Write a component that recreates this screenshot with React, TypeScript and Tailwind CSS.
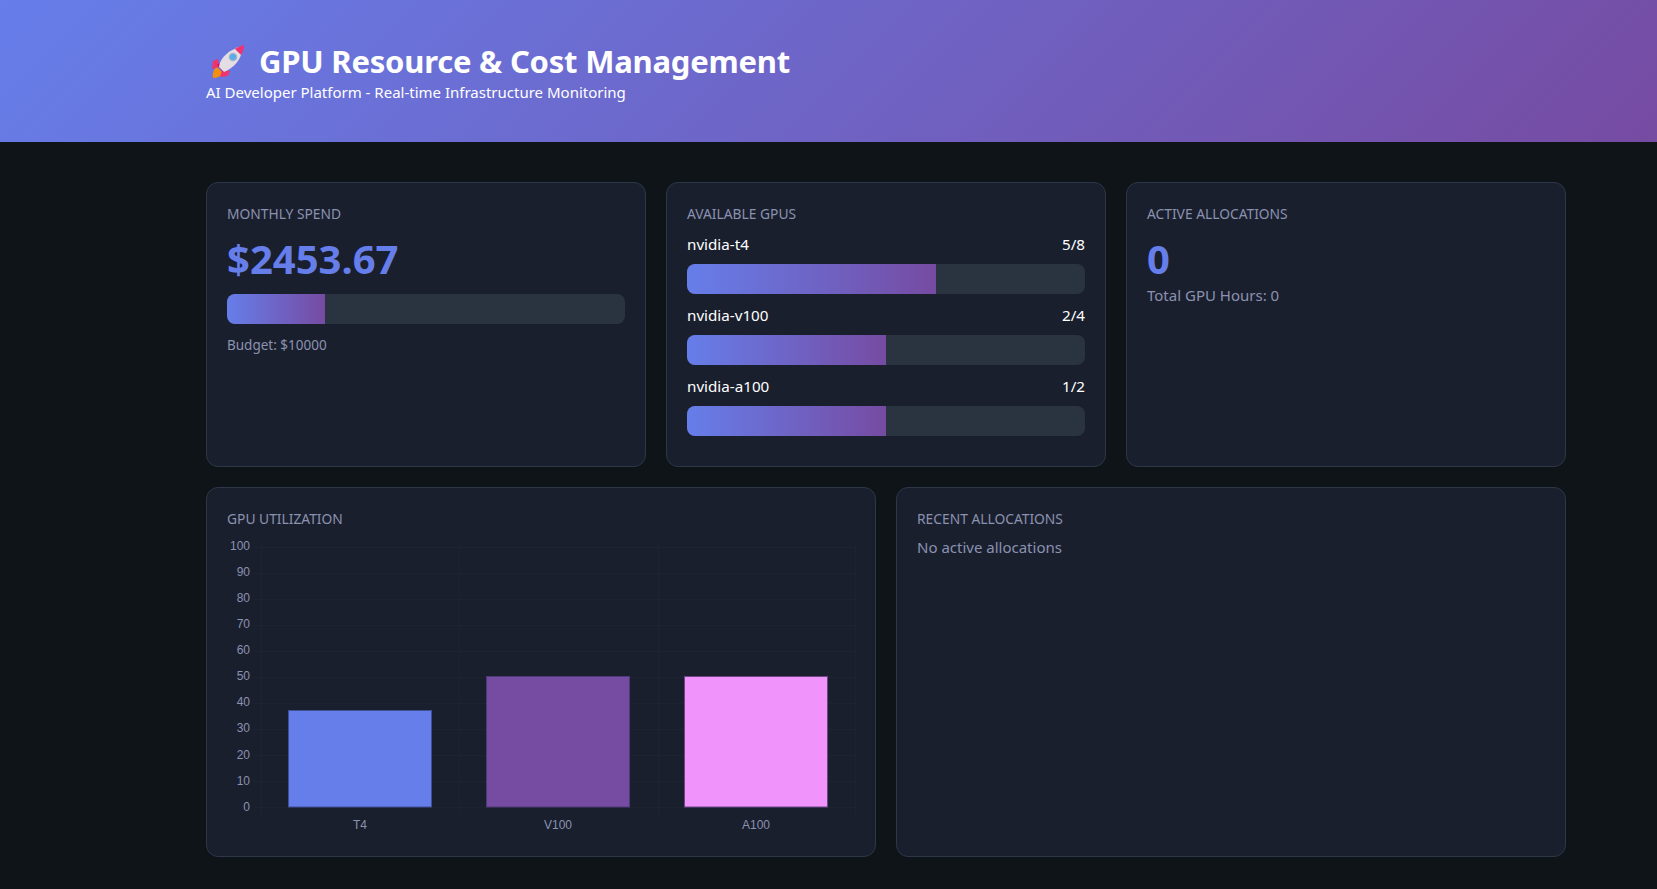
import type { ReactNode } from "react";

const gpus = [
  { name: "nvidia-t4", used: 5, total: 8 },
  { name: "nvidia-v100", used: 2, total: 4 },
  { name: "nvidia-a100", used: 1, total: 2 },
];

const bars = [
  { label: "T4", x: 288.5, top: 710.5, fill: "#667eea", stroke: "#3f4f95" },
  { label: "V100", x: 486.5, top: 676.5, fill: "#764ba2", stroke: "#4d3a78" },
  { label: "A100", x: 684.5, top: 676.5, fill: "#f093fb", stroke: "#6d4785" },
];

const Card = ({ title, children }: { title: string; children: ReactNode }) => (
  <div className="rounded-xl border border-[#2d3748] bg-[#1a1f2e] px-5 pt-5">
    <h3 className="mb-[9px] text-[13.8px] leading-[21px] font-normal text-[#8b92b0] uppercase">{title}</h3>
    {children}
  </div>
);

const Progress = ({ percent }: { percent: number }) => (
  <div className="h-[30px] overflow-hidden rounded-lg bg-[#2a3441]">
    <div
      className="h-full bg-[linear-gradient(90deg,#667eea,#764ba2)]"
      style={{ width: `${percent}%` }}
    />
  </div>
);

const Rocket = () => (
  <svg viewBox="0 0 36 36" className="mr-[13px] ml-1 h-9 w-9 shrink-0">
    <path d="M3 35c-1-5 1-9 4-11l6 6c-2 3-6 5-10 5z" fill="#f4900c" />
    <path d="M8 16l-5 2-1 8 7-2zM20 28l-2 5-8 1 2-7z" fill="#f0326e" />
    <path d="M7 22l6 7 3-1-7-8z" fill="#c2185b" />
    <path d="M9 24C10 14 20 6 33 3c-1 13-9 22-19 26z" fill="#e4dde3" />
    <path d="M25 6c2-2 6-3 9-4 0 3-1 7-3 10z" fill="#f0326e" />
    <circle cx="23" cy="14" r="3.6" fill="#55acee" stroke="#a7b4c0" strokeWidth="1.3" />
  </svg>
);

const UtilizationChart = () => {
  const ticks = [100, 90, 80, 70, 60, 50, 40, 30, 20, 10, 0];
  return (
    <svg width="629" height="300" viewBox="227 538 629 300" className="block">
      {ticks.map((t, i) => {
        const y = 546.5 + i * 26.05;
        return (
          <g key={t}>
            <line x1="254" x2="855" y1={Math.round(y) + 0.5} y2={Math.round(y) + 0.5} stroke="#1e2331" />
            <text x="250" y={y + 3.6} textAnchor="end" fontSize="12" fill="#8b92b0" fontFamily="Liberation Sans, sans-serif">
              {t}
            </text>
          </g>
        );
      })}
      {[261.5, 459.5, 658.5, 855.5].map((x) => (
        <line key={x} x1={x} x2={x} y1="546" y2="815" stroke="#1e2331" />
      ))}
      {bars.map((b) => (
        <g key={b.label}>
          <rect x={b.x} y={b.top} width="143" height={807 - b.top} fill={b.fill} stroke={b.stroke} />
          <text
            x={b.x + 71.5}
            y="829"
            textAnchor="middle"
            fontSize="12"
            fill="#8b92b0"
            fontFamily="Liberation Sans, sans-serif"
          >
            {b.label}
          </text>
        </g>
      ))}
    </svg>
  );
};

export default function App() {
  return (
    <div className="min-h-[889px] bg-[#0f1419] font-['Noto_Sans','Open_Sans',sans-serif] text-white">
      <header className="h-[142px] bg-[linear-gradient(135deg,#667eea,#764ba2)] pt-[39px] pl-[206px]">
        <h1 className="flex items-center text-[31px] leading-[44px] font-bold tracking-[-0.22px]">
          <Rocket />
          GPU Resource &amp; Cost Management
        </h1>
        <p className="mt-[-2px] text-[15px] leading-[23px]">AI Developer Platform - Real-time Infrastructure Monitoring</p>
      </header>

      <main className="flex flex-col gap-5 pt-10 pr-[91px] pl-[206px]">
        <div className="grid h-[285px] grid-cols-3 gap-5">
          <Card title="Monthly Spend">
            <div className="mb-[9px] text-[40px] leading-[52px] font-bold text-[#667eea]">$2453.67</div>
            <Progress percent={24.5} />
            <p className="mt-3 text-[13.5px] leading-[19px] text-[#8b92b0]">Budget: $10000</p>
          </Card>
          <Card title="Available GPUs">
            {gpus.map((g) => (
              <div key={g.name} className="mb-[10px]">
                <div className="mb-2 flex justify-between text-[15.2px] leading-[23px]">
                  <span>{g.name}</span>
                  <span>
                    {g.used}/{g.total}
                  </span>
                </div>
                <Progress percent={(g.used / g.total) * 100} />
              </div>
            ))}
          </Card>
          <Card title="Active Allocations">
            <div className="mb-[-1px] text-[40px] leading-[52px] font-bold text-[#667eea]">0</div>
            <p className="text-[15px] leading-[22px] text-[#8b92b0]">Total GPU Hours: 0</p>
          </Card>
        </div>

        <div className="grid h-[370px] grid-cols-2 gap-5">
          <Card title="GPU Utilization">
            <UtilizationChart />
          </Card>
          <Card title="Recent Allocations">
            <p className="mt-[-2px] text-[15px] leading-[22px] text-[#8b92b0]">No active allocations</p>
          </Card>
        </div>
      </main>
    </div>
  );
}
